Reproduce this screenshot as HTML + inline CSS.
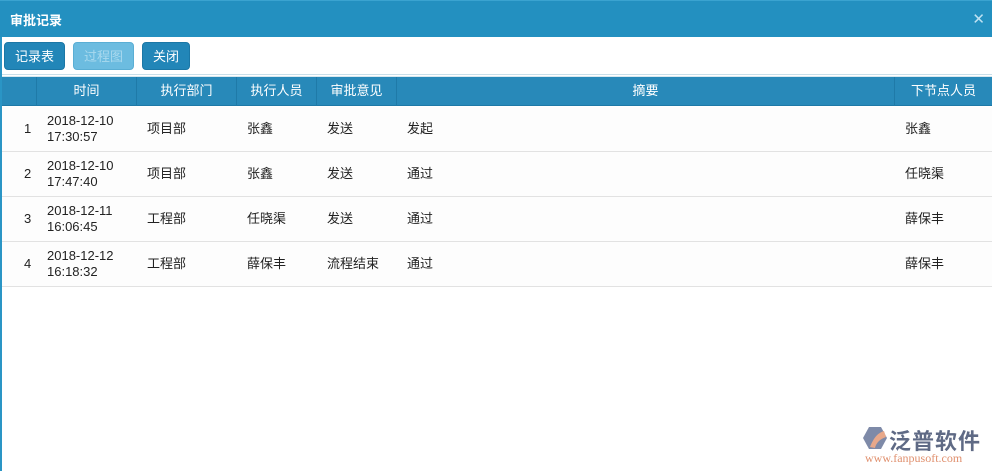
<!DOCTYPE html>
<html><head><meta charset="utf-8"><style>
*{margin:0;padding:0;box-sizing:border-box}
body{width:992px;height:471px;background:#fff;font-family:"Liberation Sans","Noto Sans CJK SC",sans-serif;font-size:13px;color:#222;position:relative;overflow:hidden}
.title{position:absolute;left:0;top:0;width:992px;height:37px;background:#2390c0;border-top:1px solid #3aa3d0}
.title span{position:absolute;left:10px;top:9px;color:#fff;font-weight:bold;font-size:13px}
.title i{position:absolute;right:7px;top:9px;color:#bfe2f2;font-style:normal;font-size:15px}
.lb{position:absolute;left:0;top:37px;width:2px;height:434px;background:#2a95c5}
.btn{position:absolute;top:42px;height:28px;border-radius:4px;color:#fff;font-size:13px;text-align:center;line-height:27px;background:#2286b8;border:1px solid #1b77a6}
.toolline{position:absolute;left:2px;top:74px;width:990px;height:3px;border-top:1px solid #c9dfe9;border-bottom:1px solid #d8e8ef}
.hdr{position:absolute;left:2px;top:77px;width:990px;height:29px;background:#2889b9;border-bottom:1px solid #1e79a7}
.hdr div{position:absolute;top:0;height:29px;line-height:28px;color:#fff;text-align:center;border-left:1px solid #1f7aa8}
.row{position:absolute;left:2px;width:990px;height:45px;border-bottom:1px solid #e2e2e2;background:#fdfdfd}
.row div{position:absolute;top:0;height:44px;display:flex;align-items:center;line-height:16px}
</style></head><body>
<div class="title"><span>审批记录</span><i>✕</i></div>
<div class="lb"></div>
<div class="btn" style="left:4px;width:61px">记录表</div>
<div class="btn" style="left:73px;width:61px;background:#6cbce0;border-color:#5aaed4;color:#a9d9ee">过程图</div>
<div class="btn" style="left:142px;width:48px">关闭</div>
<div class="toolline"></div>
<div class="hdr">
<div style="left:34px;width:100px">时间</div>
<div style="left:134px;width:100px">执行部门</div>
<div style="left:234px;width:80px">执行人员</div>
<div style="left:314px;width:80px">审批意见</div>
<div style="left:394px;width:498px">摘要</div>
<div style="left:892px;width:98px">下节点人员</div>
</div>
<div class="row" style="top:107px"><div style="left:22px">1</div><div style="left:45px">2018-12-10<br>17:30:57</div><div style="left:145px">项目部</div><div style="left:245px">张鑫</div><div style="left:325px">发送</div><div style="left:405px">发起</div><div style="left:903px">张鑫</div></div>
<div class="row" style="top:152px"><div style="left:22px">2</div><div style="left:45px">2018-12-10<br>17:47:40</div><div style="left:145px">项目部</div><div style="left:245px">张鑫</div><div style="left:325px">发送</div><div style="left:405px">通过</div><div style="left:903px">任晓渠</div></div>
<div class="row" style="top:197px"><div style="left:22px">3</div><div style="left:45px">2018-12-11<br>16:06:45</div><div style="left:145px">工程部</div><div style="left:245px">任晓渠</div><div style="left:325px">发送</div><div style="left:405px">通过</div><div style="left:903px">薛保丰</div></div>
<div class="row" style="top:242px"><div style="left:22px">4</div><div style="left:45px">2018-12-12<br>16:18:32</div><div style="left:145px">工程部</div><div style="left:245px">薛保丰</div><div style="left:325px">流程结束</div><div style="left:405px">通过</div><div style="left:903px">薛保丰</div></div>
<svg style="position:absolute;left:862px;top:425px" width="26" height="26" viewBox="0 0 26 26"><polygon points="7,2 19,2 25,13 19,24 7,24 1,13" fill="#7e8aa8"/><path d="M8,22 C12,12 16,8 22,6 L24,12 C18,14 14,18 13,23 Z" fill="#e8a88a"/></svg>
<div style="position:absolute;left:889px;top:424px;font-size:22px;color:#5f6a85;font-weight:bold;letter-spacing:1px">泛普软件</div>
<div style="position:absolute;left:865px;top:451px;font-size:12px;color:#e0906e;font-family:'Liberation Serif',serif">www.fanpusoft.com</div>
</body></html>
